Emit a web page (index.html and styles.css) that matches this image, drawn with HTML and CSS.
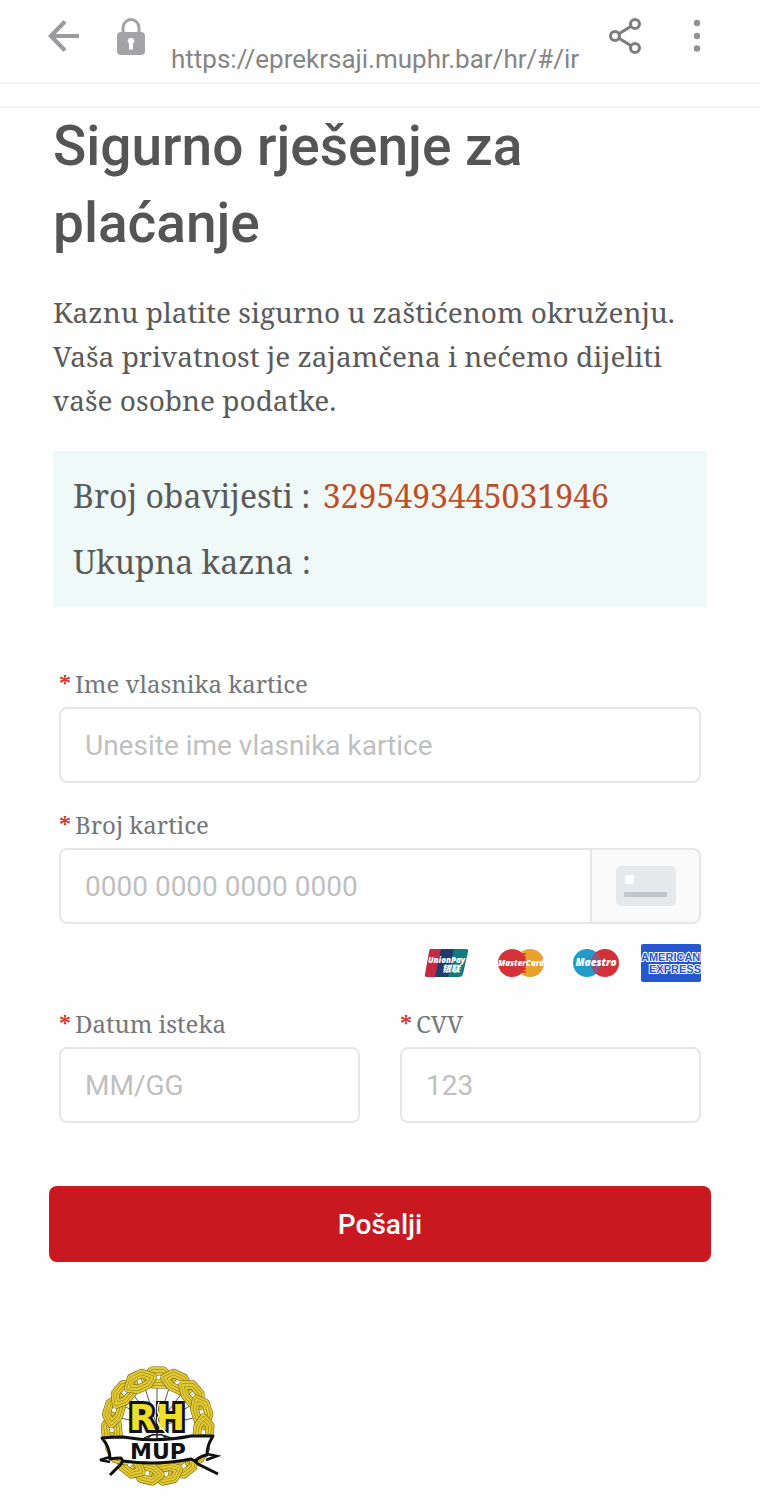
FILE: index.html
```html
<!DOCTYPE html>
<html lang="hr">
<head>
<meta charset="utf-8">
<meta name="viewport" content="width=device-width, initial-scale=1">
<title>Sigurno rješenje za plaćanje</title>
<link rel="stylesheet" href="styles.css">
</head>
<body>
<header class="browser-bar">
  <button class="icon-button" type="button" aria-label="Natrag">
    <svg width="32" height="34" viewBox="0 0 32 34" fill="none" stroke="#9b9b9d" stroke-width="4"><path d="M31 17H3M17 2.500L2.800 17 17 31.500"/></svg>
  </button>
  <svg class="lock" width="28" height="38" viewBox="0 0 28 38" aria-hidden="true"><path d="M6 17V10a8 8.500 0 0 1 16 0v7" fill="none" stroke="#a3a3a5" stroke-width="3"/><rect x="0" y="14" width="28" height="23" rx="4" fill="#a3a3a5"/><path d="M14 20a3 3 0 0 1 2 5.500v6h-4v-6a3 3 0 0 1 2-5.500z" fill="#fff"/></svg>
  <span class="url">https://eprekrsaji.muphr.bar/hr/#/ir</span>
  <button class="icon-button share" type="button" aria-label="Dijeli">
    <svg width="32" height="36" viewBox="0 0 32 36" fill="none" stroke="#7d7d7d" stroke-width="3"><circle cx="6" cy="18" r="4.500"/><circle cx="26" cy="6" r="4.500"/><circle cx="26" cy="30" r="4.500"/><path d="M10 15.700L22 8.300M10 20.300L22 27.700"/></svg>
  </button>
  <button class="icon-button" type="button" aria-label="Izbornik">
    <svg width="8" height="34" viewBox="0 0 8 34" fill="#929292"><circle cx="4" cy="4" r="3.200"/><circle cx="4" cy="17" r="3.200"/><circle cx="4" cy="29.500" r="3.200"/></svg>
  </button>
</header>
<div class="strip"></div>
<main class="page">
  <h1 class="title">Sigurno rješenje za plaćanje</h1>
  <p class="intro">Kaznu platite sigurno u zaštićenom okruženju. Vaša privatnost je zajamčena i nećemo dijeliti vaše osobne podatke.</p>
  <section class="notice">
    <div>Broj obavijesti : <span class="notice-number">3295493445031946</span></div>
    <div>Ukupna kazna :</div>
  </section>
  <div class="fields">
    <div class="field">
      <label class="label" for="holder"><span class="star">*</span>Ime vlasnika kartice</label>
      <input class="input" id="holder" type="text" placeholder="Unesite ime vlasnika kartice" autocomplete="off">
    </div>
    <div class="field">
      <label class="label" for="number"><span class="star">*</span>Broj kartice</label>
      <div class="group">
        <input class="input group-input" id="number" type="text" placeholder="0000 0000 0000 0000" autocomplete="off">
        <span class="addon">
          <svg width="60" height="40" viewBox="0 0 60 40" aria-hidden="true"><rect width="60" height="40" rx="5" fill="#e5e9ec"/><rect x="9" y="9" width="9" height="9" rx="1.500" fill="#fff"/><rect x="8" y="26" width="43" height="5" rx="1" fill="#c0c7cc"/></svg>
        </span>
      </div>
    </div>
    <div class="brands">
      <svg width="46" height="30" viewBox="0 0 46 30" role="img" aria-label="UnionPay">
        <path d="M6 1H18L12 29H3Q0 29 1 26L5 4Q5.500 1 6 1Z" fill="#c62842"/>
        <path d="M17 1H31L25 29H11Z" fill="#203b70"/>
        <path d="M30 1H42Q45 1 44 4L39 26Q38 29 35 29H24Z" fill="#167b7c"/>
        <text x="4" y="15" class="brand-text union">UnionPay</text>
        <text x="18" y="24" class="brand-text union-cjk">银联</text>
      </svg>
      <svg width="48" height="30" viewBox="0 0 48 30" role="img" aria-label="MasterCard">
        <circle cx="33" cy="15" r="14" fill="#e9a12c"/><circle cx="15" cy="15" r="14" fill="#d5333a"/>
        <path d="M24 6h5M25 9h4M26 12h3M26 18h3M25 21h4M24 24h5" stroke="#d5333a" stroke-width="1.500"/>
        <text x="24" y="18" text-anchor="middle" class="brand-text master">MasterCard</text>
      </svg>
      <svg width="48" height="30" viewBox="0 0 48 30" role="img" aria-label="Maestro">
        <circle cx="15" cy="15" r="14" fill="#229bc9"/><circle cx="33" cy="15" r="14" fill="#d72f38"/>
        <path d="M24 4.300a14 14 0 0 1 0 21.400a14 14 0 0 1 0-21.400z" fill="#8c577f"/>
        <text x="24" y="18" text-anchor="middle" class="brand-text maestro">Maestro</text>
      </svg>
      <svg width="60" height="38" viewBox="0 0 60 38" role="img" aria-label="American Express">
        <rect width="60" height="38" rx="2" fill="#2757cf"/>
        <text x="0" y="17" class="amex">AMERICAN</text><text x="60" y="29" text-anchor="end" class="amex">EXPRESS</text>
      </svg>
    </div>
    <div class="columns">
      <div class="field">
        <label class="label" for="expiry"><span class="star">*</span>Datum isteka</label>
        <input class="input" id="expiry" type="text" placeholder="MM/GG" autocomplete="off">
      </div>
      <div class="field">
        <label class="label" for="cvv"><span class="star">*</span>CVV</label>
        <input class="input" id="cvv" type="text" placeholder="123" autocomplete="off">
      </div>
    </div>
  </div>
  <button class="submit" type="button">Pošalji</button>
  <footer class="footer">
    <svg width="140" height="140" viewBox="0 0 140 140" role="img" aria-label="RH MUP">
      <defs>
        <g id="link" fill="none" stroke-linejoin="round">
          <path d="M54 20L61 12H73L82 20L75 25H63Z" stroke="#6b6019" stroke-width="9"/>
          <path d="M54 20L61 12H73L82 20L75 25H63Z" stroke="#e3ca31" stroke-width="7.800"/>
          <path d="M54 20L61 12H73L82 20L75 25H63Z" stroke="#8a7b1f" stroke-width="3.400"/>
          <path d="M54 20L61 12H73L82 20L75 25H63Z" stroke="#e3ca31" stroke-width="2.400"/>
        </g>
      </defs>
      <g stroke="#555" stroke-width="1"><path d="M67 67V24M67 67L54 26M67 67L80 26M67 67L42 34M67 67L92 34M67 67L31 45M67 67L103 45M67 67L26 58M67 67L108 58"/></g>
      <g transform="translate(4 0) scale(.95 1)">
        <use href="#link"/><use href="#link" transform="rotate(24 67 67)"/><use href="#link" transform="rotate(48 67 67)"/><use href="#link" transform="rotate(72 67 67)"/><use href="#link" transform="rotate(96 67 67)"/><use href="#link" transform="rotate(120 67 67)"/><use href="#link" transform="rotate(144 67 67)"/><use href="#link" transform="rotate(168 67 67)"/><use href="#link" transform="rotate(192 67 67)"/><use href="#link" transform="rotate(216 67 67)"/><use href="#link" transform="rotate(240 67 67)"/><use href="#link" transform="rotate(264 67 67)"/><use href="#link" transform="rotate(288 67 67)"/><use href="#link" transform="rotate(312 67 67)"/><use href="#link" transform="rotate(336 67 67)"/>
      </g>
      <text x="67" y="71" text-anchor="middle" class="crest-rh">RH</text>
      <path d="M69 43Q66 51 69 56Q65 63 71 68L78 76" fill="none" stroke="#fff" stroke-width="1.500"/>
      <path d="M53 80Q67 71 82 80M58 79L63 75M76 79L71 75M67 79V74" fill="none" stroke="#222" stroke-width="1.500"/>
      <path d="M20 98L10 101 20 103M117 95L127 97 116 101" fill="none" stroke="#111" stroke-width="2.500"/>
      <path d="M33 101L31 105 20 116M103 100L108 105 128 115" fill="none" stroke="#111" stroke-width="3"/>
      <path d="M12 79Q25 78 33 78Q67 84 101 77L123 77Q117 86 117 96Q110 97 105 102L101 100Q67 107 33 102L31 99Q25 99 20 100Q20 88 12 79Z" fill="#fff" stroke="#111" stroke-width="3" stroke-linejoin="round"/>
      <text x="68" y="100" text-anchor="middle" class="crest-mup">MUP</text>
    </svg>
  </footer>
</main>
</body>
</html>
```
FILE: styles.css
```css
* { box-sizing: border-box; }
body {
  margin: 0;
  background: #fefefe;
  color: #5a5a5a;
  font-family: "Noto Serif", "Liberation Serif", serif;
}
button, input { font-family: Roboto, sans-serif; }
.browser-bar {
  display: flex;
  align-items: flex-start;
  height: 84px;
  padding: 18px 59px 0 48px;
  border-bottom: 2px solid #f5f5f5;
}
.icon-button {
  display: flex;
  align-items: center;
  height: 36px;
  padding: 0;
  border: 0;
  background: none;
}
.lock { margin: 0 26px 0 37px; }
.url {
  flex: 1;
  padding-top: 24px;
  font: 26px/34px Roboto, sans-serif;
  color: #858585;
  white-space: nowrap;
}
.share { margin-right: 52px; }
.strip { height: 24px; border-bottom: 2px solid #f5f5f5; }
.page { padding: 0 53px; }
.title {
  margin: 0 0 28px;
  font: 500 55px/77px Roboto, sans-serif;
  color: #555;
}
.intro { margin: 0 0 29px; font-size: 28px; line-height: 44px; }
.notice {
  padding: 12px 20px;
  background: #eef9f8;
  font-size: 32px;
  line-height: 66px;
}
.notice-number { margin-left: 4px; color: #c04d27; }
.fields { padding: 60px 6px 0; }
.field { margin-bottom: 25px; }
.label {
  display: block;
  height: 40px;
  font-size: 24px;
  line-height: 34px;
  color: #747679;
}
.star { margin-right: 4px; color: #cc3535; font-weight: 600; }
.input {
  display: block;
  width: 100%;
  height: 76px;
  padding: 0 24px;
  border: 2px solid #e6e6e6;
  border-radius: 8px;
  background: #fff;
  font-size: 28px;
  color: #555;
}
.input::placeholder { color: #c0c0c0; opacity: 1; }
.group { display: flex; }
.group-input { flex: 1; min-width: 0; border-radius: 8px 0 0 8px; }
.addon {
  display: flex;
  align-items: center;
  justify-content: center;
  width: 109px;
  border: 2px solid #e6e6e6;
  border-left: 0;
  border-radius: 0 8px 8px 0;
  background: #fafafa;
}
.brands {
  display: flex;
  align-items: center;
  justify-content: flex-end;
  gap: 27px;
  margin: -5px 0 25px;
}
.brands svg:last-child { margin-left: -6px; }
.brand-text { font-family: "Open Sans", sans-serif; font-style: italic; font-weight: 800; fill: #fff; }
.union { font-size: 8px; }
.union-cjk { font-family: "Noto Sans CJK SC", sans-serif; font-size: 9px; }
.master { font-size: 8px; }
.maestro { font-size: 10px; }
.amex {
  font: 700 11px "Liberation Sans", sans-serif;
  fill: #2757cf;
  stroke: #fff;
  stroke-width: 2px;
  paint-order: stroke;
}
.columns { display: grid; grid-template-columns: 1fr 1fr; gap: 40px; }
.submit {
  display: block;
  width: calc(100% + 8px);
  height: 76px;
  margin: 38px -4px 0;
  border: 0;
  border-radius: 8px;
  background: #c9181f;
  color: #fff;
  font-size: 28px;
  font-weight: 500;
}
.footer { display: flex; padding: 97px 37px 8px; }
.crest-rh {
  font: 700 35px "DejaVu Sans", sans-serif;
  fill: #f0df28;
  stroke: #111;
  stroke-width: 6px;
  paint-order: stroke;
}
.crest-mup { font: 700 22px "DejaVu Sans", sans-serif; fill: #111; }
```
